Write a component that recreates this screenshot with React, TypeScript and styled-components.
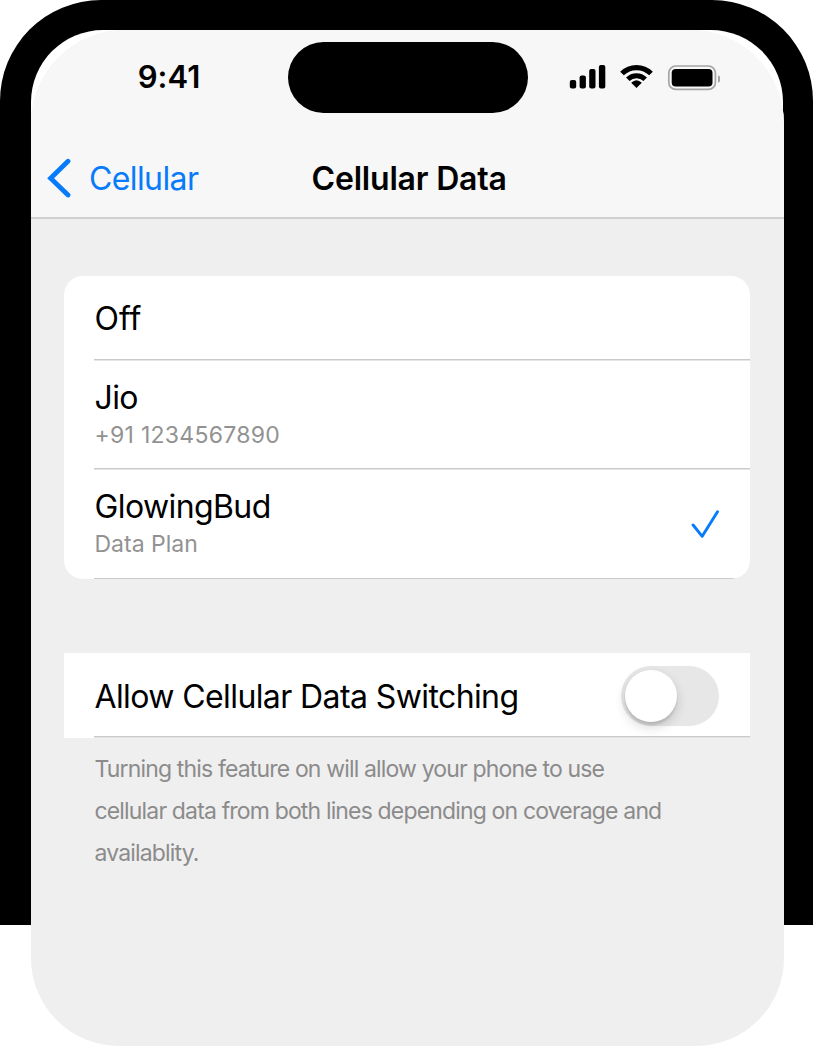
import React, { useState } from "react";
import styled, { createGlobalStyle } from "styled-components";

const GlobalStyle = createGlobalStyle`
  *, *::before, *::after { box-sizing: border-box; }
  html, body { margin: 0; padding: 0; background: #fff; }
  body { font-family: Inter, "Liberation Sans", sans-serif; color: #000; overflow: hidden; }
`;

const Stage = styled.main`
  display: grid;
  width: 815px;
  height: 1046px;
  overflow: hidden;
`;

const Bezel = styled.div`
  grid-area: 1 / 1;
  display: flex;
  width: 813.3px;
  height: 925px;
  padding: 30.4px 30.7px 30px 30.5px;
  border-radius: 101px 101px 0 0;
  background: #000;
`;

const Glass = styled.div`
  flex: 1;
  border-radius: 72px 72px 0 0;
  background: linear-gradient(#fff 0 110px, #f7f7f7 110px 188px, #efefef 188px);
`;

const Screen = styled.div`
  grid-area: 1 / 1;
  display: flex;
  flex-direction: column;
  width: 753.3px;
  height: 1015.6px;
  margin: 30.4px 0 0 31.2px;
  border-radius: 94px 94px 88px 88px;
  overflow: hidden;
  background: #efefef;
`;

const Header = styled.header`
  height: 189px;
  background: #f7f7f7;
  border-bottom: 2px solid #cfcfcf;
`;

const StatusBar = styled.div`
  display: grid;
  grid-template-columns: 257px 240px 1fr;
  height: 94px;
  padding-top: 11.6px;
`;

const Clock = styled.time`
  align-self: start;
  padding: 16px 0 0 106.5px;
  font-size: 31px;
  line-height: 38px;
  font-weight: 600;
  letter-spacing: 0.1px;
`;

const Island = styled.div`
  width: 240px;
  height: 71px;
  border-radius: 36px;
  background: #000;
`;

const Indicators = styled.div`
  padding: 20px 0 0 40px;
  svg { display: block; }
`;

const NavBar = styled.nav`
  display: grid;
  grid-template-columns: 264px auto 1fr;
  align-items: center;
  height: 93px;
  padding: 17px 0 0 15.9px;
`;

const BackButton = styled.button`
  display: flex;
  align-items: center;
  gap: 17.9px;
  padding: 0;
  border: 0;
  background: none;
  color: #087bfb;
  font: 400 32px/40px Inter, "Liberation Sans", sans-serif;
  letter-spacing: -0.6px;
  svg { margin: -2px 0 0; }
`;

const Title = styled.h1`
  margin: 0 0 0 0.5px;
  font-size: 32px;
  line-height: 40px;
  font-weight: 600;
  letter-spacing: -0.2px;
`;

const Content = styled.div`
  display: flex;
  flex-direction: column;
  padding: 56.9px 34.5px 0 32.8px;
`;

const Card = styled.section<{ $rounded?: boolean }>`
  border-radius: ${(p) => (p.$rounded ? "19px" : "0")};
  background: #fff;
  overflow: hidden;
  padding-left: 30.5px;
  & + & { margin-top: 74.4px; }
`;

const Row = styled.div<{ $height: number; $inset?: boolean }>`
  display: flex;
  align-items: center;
  justify-content: space-between;
  height: ${(p) => p.$height}px;
  padding-right: 30.5px;
  background: linear-gradient(#cacaca, #cacaca) left bottom / ${(p) => (p.$inset ? "calc(100% - 15px)" : "100%")} 1.5px no-repeat;
`;

const Label = styled.div<{ $spacing?: number; $single?: boolean }>`
  padding-top: ${(p) => (p.$single ? "2px" : "0")};
  font-size: 32px;
  line-height: 40px;
  letter-spacing: ${(p) => p.$spacing ?? -0.6}px;
`;

const Lines = styled.div`
  padding-bottom: 2px;
`;

const Detail = styled.div<{ $spacing: number }>`
  margin-top: 1px;
  color: #929292;
  font-size: 23px;
  line-height: 32px;
  letter-spacing: ${(p) => p.$spacing}px;
`;

const Switch = styled.button<{ $on: boolean }>`
  display: flex;
  justify-content: ${(p) => (p.$on ? "flex-end" : "flex-start")};
  align-items: center;
  width: 98px;
  height: 60px;
  padding: 4px;
  border: 0;
  border-radius: 30px;
  background: ${(p) => (p.$on ? "#34c759" : "#e7e7e7")};
`;

const Knob = styled.span`
  width: 52px;
  height: 52px;
  border-radius: 50%;
  background: #fff;
  box-shadow: 0 5px 12px rgba(0, 0, 0, 0.16), 0 3px 2px rgba(0, 0, 0, 0.1);
`;

const Note = styled.p`
  margin: 10px 0 0 30.5px;
  color: #8b8b8b;
  font-size: 23px;
  line-height: 42px;
  letter-spacing: -0.84px;
  white-space: pre-line;
`;

const StatusIcons = () => (
  <svg width="152" height="32" viewBox="568 62 152 32" aria-hidden="true">
    <rect x="569.8" y="80" width="6.4" height="8.4" rx="2" />
    <rect x="579.6" y="75.6" width="6.3" height="12.8" rx="2" />
    <rect x="589.2" y="69" width="6.3" height="19.4" rx="2" />
    <rect x="598.9" y="65" width="6.4" height="23.4" rx="2" />
    <g fill="none" stroke="#000">
      <path d="M622 73.5 A20.6 20.6 0 0 1 651 73.5" strokeWidth="5.2" />
      <path d="M627.8 79.2 A12.4 12.4 0 0 1 645.2 79.2" strokeWidth="5" />
    </g>
    <path d="M636.5 88 L631.2 82.8 Q636.5 77.6 641.8 82.8 Z" />
    <rect x="668.8" y="66" width="46.6" height="23.4" rx="7" fill="none" stroke="#a5a5a5" strokeWidth="1.7" />
    <rect x="671.7" y="69" width="40.8" height="17.4" rx="4" />
    <path d="M718 75.2 Q720.7 76.3 720.7 79 Q720.7 81.5 718 82.7 Z" fill="#a5a5a5" />
  </svg>
);

const BackIcon = () => (
  <svg width="24" height="40" viewBox="0 0 24 40" fill="none" aria-hidden="true">
    <path d="M21 3.2 L3.6 20.2 L21 37" stroke="currentColor" strokeWidth="4.8" strokeLinecap="round" strokeLinejoin="miter" />
  </svg>
);

const CheckIcon = () => (
  <svg width="30" height="30" viewBox="0 0 30 30" fill="none" aria-label="Selected">
    <path d="M4.1 16 L13.2 27.3 L28.5 2.8" stroke="#087bfb" strokeWidth="2.9" strokeLinecap="round" strokeLinejoin="round" />
  </svg>
);

export default function App() {
  const [on, setOn] = useState(false);
  return (
    <>
      <GlobalStyle />
      <Stage>
        <Bezel><Glass /></Bezel>
        <Screen>
          <Header>
            <StatusBar>
              <Clock>9:41</Clock>
              <Island />
              <Indicators><StatusIcons /></Indicators>
            </StatusBar>
            <NavBar>
              <BackButton><BackIcon />Cellular</BackButton>
              <Title>Cellular Data</Title>
            </NavBar>
          </Header>
          <Content>
            <Card $rounded>
              <Row $height={84.4}><Label $single $spacing={0}>Off</Label></Row>
              <Row $height={109.2}>
                <Lines><Label>Jio</Label><Detail $spacing={0.28}>+91 1234567890</Detail></Lines>
              </Row>
              <Row $height={109.2} $inset>
                <Lines><Label>GlowingBud</Label><Detail $spacing={0}>Data Plan</Detail></Lines>
                <CheckIcon />
              </Row>
            </Card>
            <Card>
              <Row $height={84.5}>
                <Label $single>Allow Cellular Data Switching</Label>
                <Switch $on={on} role="switch" aria-checked={on} aria-label="Allow Cellular Data Switching" onClick={() => setOn(!on)}>
                  <Knob />
                </Switch>
              </Row>
            </Card>
            <Note>{"Turning this feature on will allow your phone to use\ncellular data from both lines depending on coverage and\navailablity."}</Note>
          </Content>
        </Screen>
      </Stage>
    </>
  );
}
